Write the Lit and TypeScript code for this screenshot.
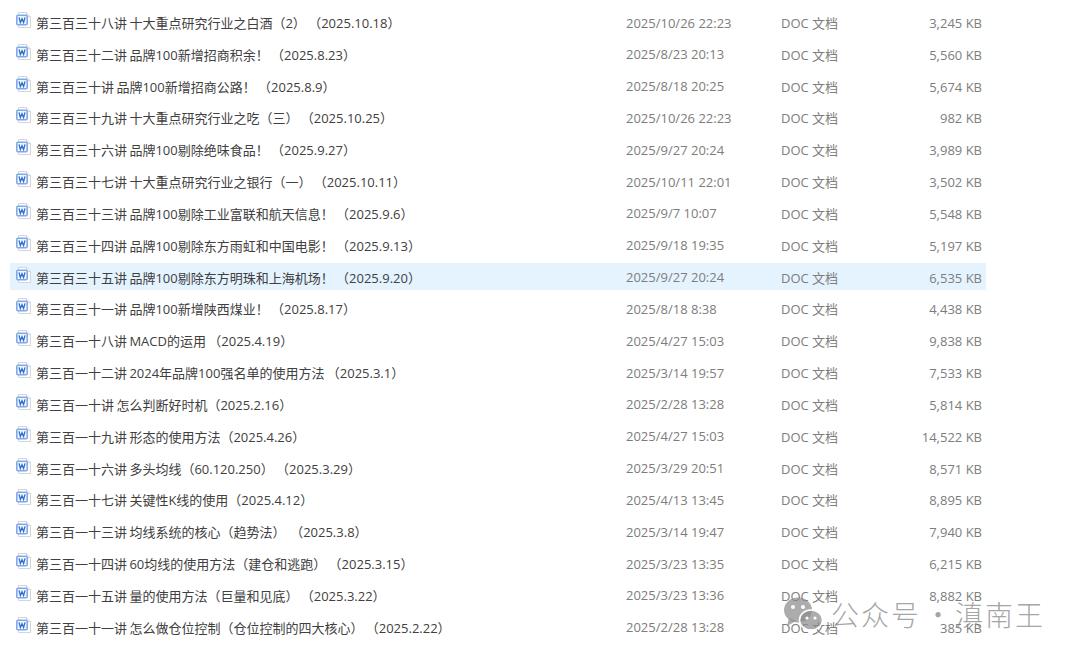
import { LitElement, html, css, svg } from "lit";
import { customElement } from "lit/decorators.js";

const rows: [string, string, string, boolean?][] = [
  ["第三百三十八讲 十大重点研究行业之白酒（2） （2025.10.18）", "2025/10/26 22:23", "3,245 KB"],
  ["第三百三十二讲 品牌100新增招商积余！ （2025.8.23）", "2025/8/23 20:13", "5,560 KB"],
  ["第三百三十讲 品牌100新增招商公路！ （2025.8.9）", "2025/8/18 20:25", "5,674 KB"],
  ["第三百三十九讲 十大重点研究行业之吃（三） （2025.10.25）", "2025/10/26 22:23", "982 KB"],
  ["第三百三十六讲 品牌100剔除绝味食品！ （2025.9.27）", "2025/9/27 20:24", "3,989 KB"],
  ["第三百三十七讲 十大重点研究行业之银行（一） （2025.10.11）", "2025/10/11 22:01", "3,502 KB"],
  ["第三百三十三讲 品牌100剔除工业富联和航天信息！ （2025.9.6）", "2025/9/7 10:07", "5,548 KB"],
  ["第三百三十四讲 品牌100剔除东方雨虹和中国电影！ （2025.9.13）", "2025/9/18 19:35", "5,197 KB"],
  ["第三百三十五讲 品牌100剔除东方明珠和上海机场！ （2025.9.20）", "2025/9/27 20:24", "6,535 KB", true],
  ["第三百三十一讲 品牌100新增陕西煤业！ （2025.8.17）", "2025/8/18 8:38", "4,438 KB"],
  ["第三百一十八讲 MACD的运用 （2025.4.19）", "2025/4/27 15:03", "9,838 KB"],
  ["第三百一十二讲 2024年品牌100强名单的使用方法 （2025.3.1）", "2025/3/14 19:57", "7,533 KB"],
  ["第三百一十讲 怎么判断好时机（2025.2.16）", "2025/2/28 13:28", "5,814 KB"],
  ["第三百一十九讲 形态的使用方法（2025.4.26）", "2025/4/27 15:03", "14,522 KB"],
  ["第三百一十六讲 多头均线（60.120.250） （2025.3.29）", "2025/3/29 20:51", "8,571 KB"],
  ["第三百一十七讲 关键性K线的使用（2025.4.12）", "2025/4/13 13:45", "8,895 KB"],
  ["第三百一十三讲 均线系统的核心（趋势法）\u00a0\u00a0（2025.3.8）", "2025/3/14 19:47", "7,940 KB"],
  ["第三百一十四讲 60均线的使用方法（建仓和逃跑） （2025.3.15）", "2025/3/23 13:35", "6,215 KB"],
  ["第三百一十五讲 量的使用方法（巨量和见底） （2025.3.22）", "2025/3/23 13:36", "8,882 KB"],
  ["第三百一十一讲 怎么做仓位控制（仓位控制的四大核心） （2025.2.22）", "2025/2/28 13:28", "385 KB"],
];

const docIcon = svg`<svg class="icon" width="17" height="17" viewBox="0 0 17 17">
  <path d="M3.5 0.5H11.5L15.5 4.5V15.5H3.5Z" fill="#fff" stroke="#d2d5da"/>
  <path d="M11.5 0.5V4.5H15.5" fill="#f0f2f6" stroke="#d2d5da"/>
  <rect x="1" y="2.5" width="12" height="11" rx="2" fill="#7fa9ea"/>
  <rect x="2.6" y="4" width="8.8" height="8" rx="0.5" fill="#f2f6fd"/>
  <path d="M4 5.4L5.4 10.6L7 6.8L8.6 10.6L10 5.4" fill="none" stroke="#2f6fd0" stroke-width="1.3"/>
</svg>`;

@customElement("app-root")
export class AppRoot extends LitElement {
  static styles = css`
    :host {
      display: block;
      width: 1080px;
      height: 660px;
      background: #fff;
      overflow: hidden;
      position: relative;
      font-family: "Open Sans", "Noto Sans CJK SC", sans-serif;
      font-size: 13px;
    }
    .list {
      padding: 8px 0 0 10px;
      width: 976px;
    }
    .row {
      box-sizing: border-box;
      display: grid;
      grid-template-columns: 616px 155px 1fr;
      height: 27px;
      margin-bottom: 4.84px;
      padding-top: 2px;
      align-items: center;
      color: #7d7d7d;
      white-space: nowrap;
    }
    .row.sel {
      background: #e5f3ff;
    }
    .name {
      display: flex;
      align-items: center;
      gap: 4px;
      padding-left: 5px;
      color: #404040;
      min-width: 0;
      word-spacing: -1px;
    }
    .icon {
      flex: none;
      margin-bottom: 4px;
    }
    .type {
      display: grid;
      grid-template-columns: 1fr auto;
      align-items: baseline;
    }
    .size {
      padding-right: 4px;
    }
    .mark {
      position: absolute;
      left: 783px;
      top: 596px;
      display: flex;
      align-items: center;
      gap: 8px;
      color: rgba(130, 130, 130, 0.72);
      font-size: 28px;
      letter-spacing: 2px;
      line-height: 36px;
      font-family: "Noto Sans CJK SC", sans-serif;
      font-weight: 300;
    }
    .dot {
      display: inline-block;
      width: 34px;
      text-align: center;
      letter-spacing: 0;
    }
  `;

  render() {
    return html`
      <div class="list">
        ${rows.map(
          ([n, d, s, sel]) => html`
            <div class="row ${sel ? "sel" : ""}">
              <div class="name">${docIcon}<span>${n}</span></div>
              <div>${d}</div>
              <div class="type">
                <span>DOC 文档</span>
                <span class="size">${s}</span>
              </div>
            </div>
          `
        )}
      </div>
      <div class="mark">
        <svg width="40" height="34" viewBox="0 0 40 34">
          <ellipse cx="15" cy="13" rx="14" ry="12.5" fill="rgba(140,140,140,.72)"/>
          <path d="M6 21L4 29L13 24Z" fill="rgba(140,140,140,.72)"/>
          <ellipse cx="28" cy="23" rx="11.5" ry="10" fill="rgba(140,140,140,.72)" stroke="#fff" stroke-width="1.5"/>
          <circle cx="10" cy="10" r="2" fill="#fff"/>
          <circle cx="20" cy="10" r="2" fill="#fff"/>
          <circle cx="24" cy="21" r="1.6" fill="#fff"/>
          <circle cx="32" cy="21" r="1.6" fill="#fff"/>
        </svg>
        <span>公众号<span class="dot">·</span>滇南王</span>
      </div>
    `;
  }
}
